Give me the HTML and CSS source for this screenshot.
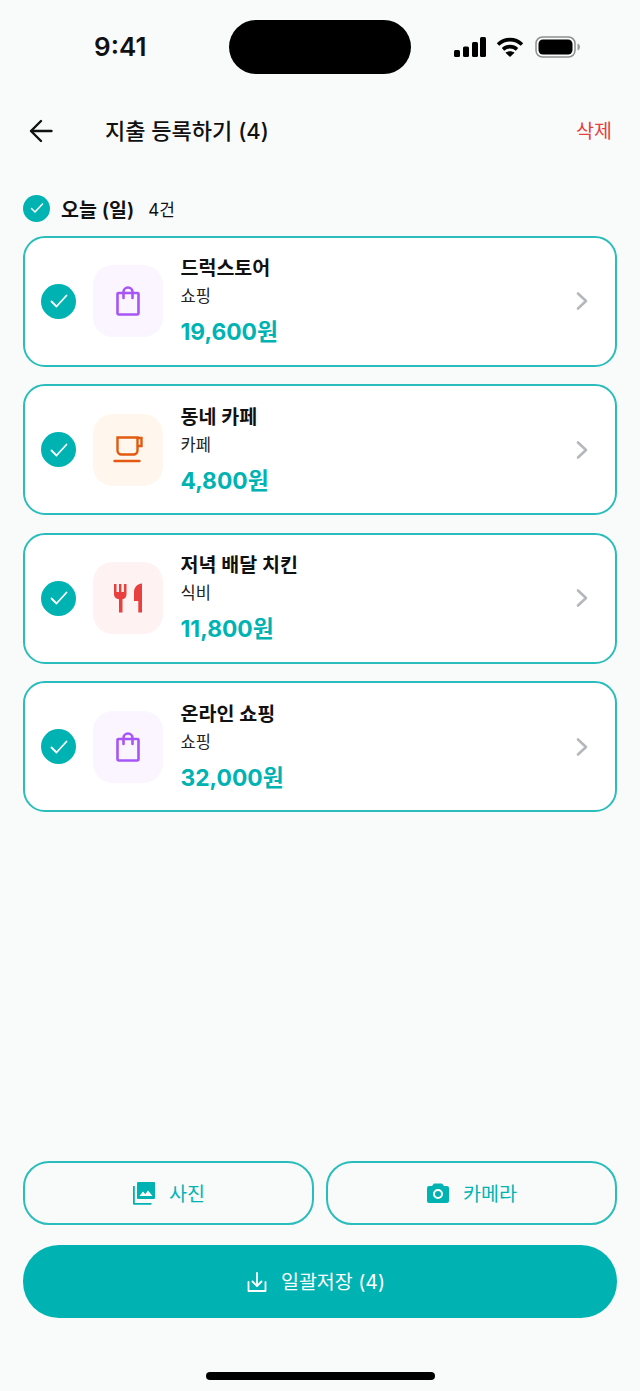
FILE: index.html
```html
<!DOCTYPE html>
<html lang="ko">
<head>
    <meta charset="UTF-8">
    <meta name="viewport" content="width=device-width, initial-scale=1.0">
    <title>지출 등록하기</title>
    <link rel="stylesheet" href="styles.css">
</head>
<body>
    <div class="screen">
        <div class="status-bar">
            <span class="time">9:41</span>
            <div class="island"></div>
            <div class="status-icons">
                <svg width="34" height="20" viewBox="0 0 34 20" fill="#000"><rect x="1" y="13" width="6" height="7" rx="1.500"/><rect x="10" y="9.500" width="6" height="10.500" rx="1.500"/><rect x="19" y="5" width="6" height="15" rx="1.500"/><rect x="27" y="0" width="6" height="20" rx="1.500"/></svg>
                <svg class="wifi" width="28" height="20" viewBox="0 0 28 20" fill="none" stroke="#000" stroke-width="3.600"><path d="M2 7.500C9 1 19 1 26 7.500"/><path d="M7 12.300C11 8.700 17 8.700 21 12.300"/><path d="M14 20l-4.500-4.300c2.500-2 6.500-2 9 0z" fill="#000" stroke="none"/></svg>
                <svg width="46" height="22" viewBox="0 0 46 22"><rect x="1" y="1" width="39" height="20" rx="6.500" fill="none" stroke="#8e8e8e" stroke-width="1.500"/><rect x="3.500" y="3.500" width="34" height="15" rx="4.500" fill="#000"/><path d="M42.500 7.500c1.800.6 2.500 2 2.500 3.500s-.7 2.900-2.500 3.500z" fill="#9a9a9a"/></svg>
            </div>
        </div>

        <header class="top-bar">
            <svg class="back" width="24" height="24" viewBox="0 0 24 24" fill="none" stroke="#111" stroke-width="2.400" stroke-linecap="round" stroke-linejoin="round"><path d="M22.500 12H2.500"/><path d="M12 2L2 12l10 10"/></svg>
            <h1>지출 등록하기 (4)</h1>
            <span class="delete">삭제</span>
        </header>

        <div class="day-row">
            <span class="check check-small"><svg width="16" height="16" viewBox="0 0 16 16" fill="none" stroke="#fff" stroke-width="1.500" stroke-linecap="round" stroke-linejoin="round"><path d="M2.500 8.500l3.500 3.500 7.500-8"/></svg></span>
            <strong>오늘 (일)</strong>
            <span class="count">4건</span>
        </div>

        <div class="list">
            <div class="card">
                <span class="check"><svg width="20" height="20" viewBox="0 0 20 20" fill="none" stroke="#fff" stroke-width="1.800" stroke-linecap="round" stroke-linejoin="round"><path d="M2.500 10.500l5 5 10-11"/></svg></span>
                <div class="icon-box purple">
                    <svg width="24" height="30" viewBox="0 0 24 30" fill="none" stroke="#a855f7" stroke-width="2.600" stroke-linejoin="round" stroke-linecap="round"><path d="M2.500 7h19a1 1 0 0 1 1 1V27a1.500 1.500 0 0 1-1.500 1.500H3A1.500 1.500 0 0 1 1.500 27V8a1 1 0 0 1 1-1z"/><path d="M7.500 12V6a4.500 4.500 0 0 1 9 0v6"/></svg>
                </div>
                <div class="info">
                    <div class="name">드럭스토어</div>
                    <div class="category">쇼핑</div>
                    <div class="amount">19,600원</div>
                </div>
                <svg class="chevron" width="14" height="20" viewBox="0 0 14 20" fill="none" stroke="#b5b8ba" stroke-width="2.600" stroke-linecap="round" stroke-linejoin="round"><path d="M3 2.500l8 7.500-8 7.500"/></svg>
            </div>

            <div class="card">
                <span class="check"><svg width="20" height="20" viewBox="0 0 20 20" fill="none" stroke="#fff" stroke-width="1.800" stroke-linecap="round" stroke-linejoin="round"><path d="M2.500 10.500l5 5 10-11"/></svg></span>
                <div class="icon-box orange">
                    <svg width="30" height="27" viewBox="0 0 30 27" fill="none" stroke="#e2590f" stroke-width="2.400"><path d="M4.500 1.500h20v13a4 4 0 0 1-4 4h-12a4 4 0 0 1-4-4z"/><path d="M24.500 2h4v8h-4"/><path d="M1.500 25h25" stroke-linecap="round"/></svg>
                </div>
                <div class="info">
                    <div class="name">동네 카페</div>
                    <div class="category">카페</div>
                    <div class="amount">4,800원</div>
                </div>
                <svg class="chevron" width="14" height="20" viewBox="0 0 14 20" fill="none" stroke="#b5b8ba" stroke-width="2.600" stroke-linecap="round" stroke-linejoin="round"><path d="M3 2.500l8 7.500-8 7.500"/></svg>
            </div>

            <div class="card">
                <span class="check"><svg width="20" height="20" viewBox="0 0 20 20" fill="none" stroke="#fff" stroke-width="1.800" stroke-linecap="round" stroke-linejoin="round"><path d="M2.500 10.500l5 5 10-11"/></svg></span>
                <div class="icon-box red">
                    <svg width="28" height="30" viewBox="0 0 28 30" fill="#e8403f"><path d="M0 1h2.500v8h2.500V1h2.400v8h2.500V1h2.600v10.500c0 2.500-1.700 4.300-4 4.800V29.500H5V16.300C2 15.800 0 14 0 11.500z"/><path d="M28 0.500V29.500H24.300V18H20V9C20 4 23.500 1 28 0.500z"/></svg>
                </div>
                <div class="info">
                    <div class="name">저녁 배달 치킨</div>
                    <div class="category">식비</div>
                    <div class="amount">11,800원</div>
                </div>
                <svg class="chevron" width="14" height="20" viewBox="0 0 14 20" fill="none" stroke="#b5b8ba" stroke-width="2.600" stroke-linecap="round" stroke-linejoin="round"><path d="M3 2.500l8 7.500-8 7.500"/></svg>
            </div>

            <div class="card">
                <span class="check"><svg width="20" height="20" viewBox="0 0 20 20" fill="none" stroke="#fff" stroke-width="1.800" stroke-linecap="round" stroke-linejoin="round"><path d="M2.500 10.500l5 5 10-11"/></svg></span>
                <div class="icon-box purple">
                    <svg width="24" height="30" viewBox="0 0 24 30" fill="none" stroke="#a855f7" stroke-width="2.600" stroke-linejoin="round" stroke-linecap="round"><path d="M2.500 7h19a1 1 0 0 1 1 1V27a1.500 1.500 0 0 1-1.500 1.500H3A1.500 1.500 0 0 1 1.500 27V8a1 1 0 0 1 1-1z"/><path d="M7.500 12V6a4.500 4.500 0 0 1 9 0v6"/></svg>
                </div>
                <div class="info">
                    <div class="name">온라인 쇼핑</div>
                    <div class="category">쇼핑</div>
                    <div class="amount">32,000원</div>
                </div>
                <svg class="chevron" width="14" height="20" viewBox="0 0 14 20" fill="none" stroke="#b5b8ba" stroke-width="2.600" stroke-linecap="round" stroke-linejoin="round"><path d="M3 2.500l8 7.500-8 7.500"/></svg>
            </div>
        </div>

        <div class="actions">
            <div class="action-row">
                <button class="btn-outline">
                    <svg width="24" height="24" viewBox="0 0 24 24" fill="#00b3b3"><path d="M6 1h16a1 1 0 0 1 1 1v15a1 1 0 0 1-1 1H6a1 1 0 0 1-1-1V2a1 1 0 0 1 1-1z"/><path d="M1 5h1.800v17h16.700v1.800H2a1 1 0 0 1-1-1z"/><path d="M7.500 15l3.500-4.500 2.300 2.800 2.700-3.800 4.500 5.500z" fill="#fff"/></svg>
                    <span>사진</span>
                </button>
                <button class="btn-outline">
                    <svg width="24" height="24" viewBox="0 0 24 24" fill="#00b3b3"><path d="M8 2.500h8l2 2.500h3a2 2 0 0 1 2 2v13a2 2 0 0 1-2 2H3a2 2 0 0 1-2-2V7a2 2 0 0 1 2-2h3z"/><circle cx="12" cy="13" r="4" fill="none" stroke="#fff" stroke-width="2"/></svg>
                    <span>카메라</span>
                </button>
            </div>
            <button class="btn-save">
                <svg width="20" height="20" viewBox="0 0 20 20" fill="none" stroke="#fff" stroke-width="1.800" stroke-linecap="round" stroke-linejoin="round"><path d="M10 1v12.500"/><path d="M5.500 9.500l4.500 4.500 4.500-4.500"/><path d="M1.500 10v9h17v-9"/></svg>
                <span>일괄저장 (4)</span>
            </button>
        </div>

        <div class="home-bar"></div>
    </div>
</body>
</html>
```

FILE: styles.css
```css
:root {
    --teal: #00b3b3;
    --line: #2bbcbc;
    --bg: #f9fbfa;
    --text: #111111;
}
* {
    box-sizing: border-box;
    margin: 0;
    padding: 0;
}
body {
    font-family: 'Inter', 'Noto Sans CJK KR', sans-serif;
    background-color: var(--bg);
    color: var(--text);
}
.screen {
    width: 640px;
    height: 1391px;
    display: flex;
    flex-direction: column;
    padding: 20px 23px 11px;
    overflow: hidden;
}
.status-bar {
    display: flex;
    align-items: center;
    height: 54px;
    flex-shrink: 0;
}
.time {
    width: 206px;
    padding-left: 71px;
    font-size: 26px;
    font-weight: 600;
    line-height: 54px;
}
.island {
    width: 182px;
    height: 54px;
    border-radius: 27px;
    background: #000;
}
.status-icons {
    display: flex;
    align-items: center;
    gap: 9px;
    margin-left: 42px;
}
.wifi {
    margin-right: 2px;
}
.top-bar {
    display: flex;
    align-items: center;
    height: 40px;
    margin-top: 37px;
    padding-left: 6px;
}
.back {
    margin-right: 52px;
}
.top-bar h1 {
    flex: 1;
    font-size: 22px;
    font-weight: 500;
    line-height: 38px;
}
.delete {
    font-size: 19.500px;
    color: #e53e3e;
    margin-right: 5px;
    margin-bottom: 3px;
}
.day-row {
    display: flex;
    align-items: center;
    height: 30px;
    margin-top: 42px;
}
.day-row strong {
    font-size: 19.500px;
    font-weight: 600;
    margin-left: 11px;
}
.count {
    font-size: 17px;
    margin-left: 14px;
}
.check {
    width: 35px;
    height: 35px;
    border-radius: 50%;
    background: var(--teal);
    display: flex;
    align-items: center;
    justify-content: center;
    flex-shrink: 0;
}
.check-small {
    width: 27px;
    height: 27px;
}
.list {
    display: flex;
    flex-direction: column;
    gap: 17.500px;
    margin-top: 12.500px;
}
.card {
    display: flex;
    align-items: center;
    height: 131px;
    padding: 0 26px 0 16px;
    background: #fff;
    border: 2px solid var(--line);
    border-radius: 22px;
}
.icon-box {
    width: 70px;
    height: 72px;
    margin-left: 17px;
    border-radius: 20px;
    display: flex;
    align-items: center;
    justify-content: center;
    flex-shrink: 0;
}
.purple { background: #faf5ff; }
.orange { background: #fff7ed; }
.red { background: #fef2f2; }
.info {
    flex: 1;
    margin-left: 17.500px;
    padding-bottom: 1px;
}
.name {
    font-size: 19.500px;
    font-weight: 600;
    line-height: 28px;
}
.category {
    font-size: 16.500px;
    font-weight: 400;
    line-height: 24px;
    margin-top: 2px;
    color: #222;
}
.amount {
    font-size: 22.800px;
    font-weight: 700;
    line-height: 30px;
    margin-top: 9px;
    color: var(--teal);
}
.actions {
    margin-top: auto;
    display: flex;
    flex-direction: column;
    gap: 20px;
}
.action-row {
    display: flex;
    gap: 12px;
}
button {
    font-family: inherit;
    display: flex;
    align-items: center;
    justify-content: center;
}
button span {
    margin-bottom: 2px;
}
.btn-outline {
    flex: 1;
    height: 64px;
    gap: 13px;
    background: transparent;
    border: 2px solid var(--line);
    border-radius: 26px;
    color: var(--teal);
    font-size: 19.500px;
    font-weight: 400;
}
.btn-save {
    height: 73px;
    gap: 14px;
    padding-right: 8px;
    background: var(--teal);
    border: none;
    border-radius: 36px;
    color: #fff;
    font-size: 19.500px;
    font-weight: 400;
}
.home-bar {
    width: 229px;
    height: 8px;
    margin: 54px auto 0;
    border-radius: 4px;
    background: #000;
    flex-shrink: 0;
}
```
